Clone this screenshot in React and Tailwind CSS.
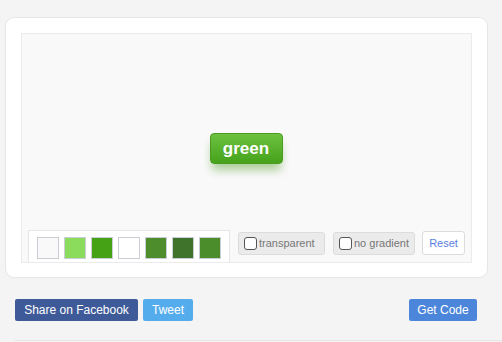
const swatches = ["#f9f9f9", "#8bdc5c", "#45a215", "#ffffff", "#4e8d2b", "#3f722a", "#4b8d2a"];

function Check({ label, width }) {
  return (
    <div className={`flex h-[23px] items-center gap-[2px] whitespace-nowrap rounded-[3px] border border-[#dcdcdc] bg-[#ebebeb] pl-[5px] text-[11px] text-[#777] ${width}`}>
      <span className="h-[13px] w-[13px] shrink-0 rounded-[3px] border border-[#555] bg-white" />
      <span>{label}</span>
    </div>
  );
}

export default function App() {
  return (
    <div className="h-[342px] w-[502px] overflow-hidden bg-[#f4f4f4] pt-[17px] font-['Liberation_Sans',Arial,sans-serif]">
      <div className="ml-[5px] w-[483px] rounded-[9px] border border-[#e6e6e6] bg-white px-[15px] pb-[14px] pt-[15px]">
        <div className="flex h-[230px] flex-col border border-[#ebebeb] bg-[#f9f9f9]">
          <div className="flex flex-1 items-center justify-center pr-[1px] pt-[33px]">
            <button className="h-[31px] w-[73px] rounded-[4px] border border-[#4b9b23] bg-gradient-to-b from-[#6cc23e] to-[#46a21a] text-[17px] font-bold text-white shadow-[0_8px_10px_-2px_rgba(74,150,30,0.45)]">
              green
            </button>
          </div>
          <div className="flex items-end gap-[8px] pl-[6px]">
            <div className="flex gap-[5px] border border-b-0 border-[#e6e6e6] bg-white px-[8px] pb-[3px] pt-[6px]">
              {swatches.map((c, i) => (
                <div key={i} className="h-[22px] w-[22px] border border-[#c9ced6]" style={{ backgroundColor: c }} />
              ))}
            </div>
            <div className="mb-[7px] flex items-center">
              <Check label="transparent" width="w-[87px]" />
              <div className="ml-[8px]">
                <Check label="no gradient" width="w-[82px]" />
              </div>
              <div className="ml-[7px] flex h-[24px] w-[43px] items-center justify-center rounded-[3px] border border-[#dcdcdc] bg-white text-[11px] text-[#5a7fdc]">
                Reset
              </div>
            </div>
          </div>
        </div>
      </div>
      <div className="mt-[21px] flex items-center px-[15px] pr-[25px] text-[12px] text-white">
        <div className="flex h-[22px] w-[123px] items-center justify-center rounded-[2px] bg-[#3e5a99]">Share on Facebook</div>
        <div className="ml-[5px] flex h-[22px] w-[50px] items-center justify-center rounded-[2px] bg-[#55aced]">Tweet</div>
        <div className="ml-auto flex h-[22px] w-[68px] items-center justify-center rounded-[2px] bg-[#4c86da]">Get Code</div>
      </div>
      <div className="ml-[15px] mt-[19px] h-px bg-[#e6e6e6]" />
    </div>
  );
}
